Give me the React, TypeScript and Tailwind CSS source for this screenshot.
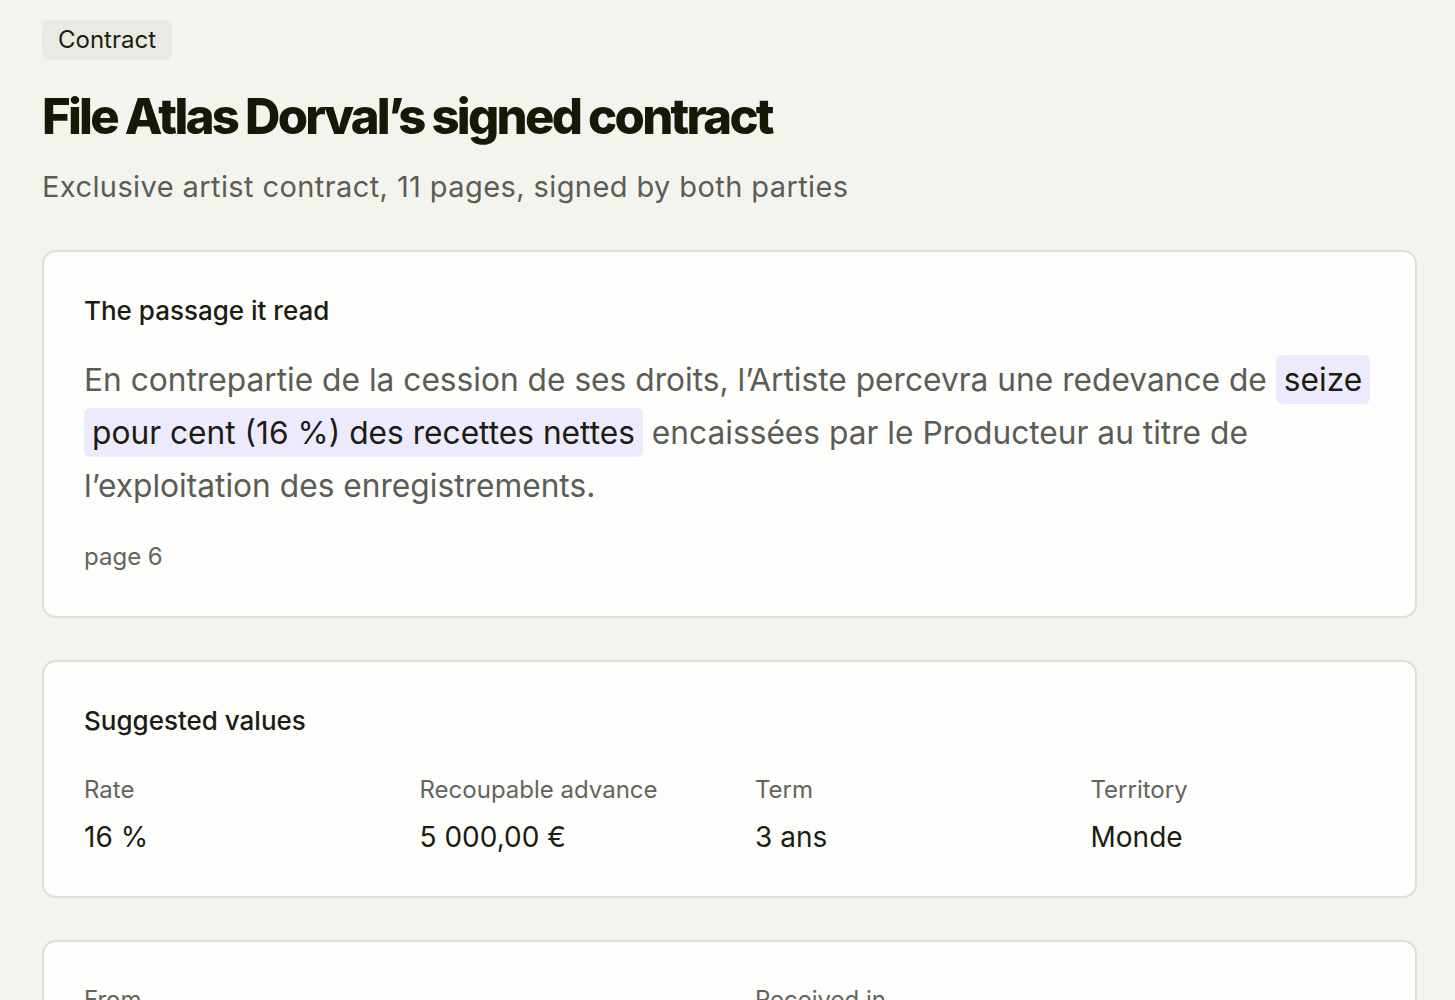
const baseFont = { fontFamily: 'Inter, "Noto Sans", sans-serif' };

function Field({ label, value }: { label: string; value: string }) {
  return (
    <div className="flex flex-col gap-[13px]">
      <span className="text-[24px] leading-8 text-[#63655d]">{label}</span>
      <span className="text-[28px] leading-9 text-[#1b1d12]">{value}</span>
    </div>
  );
}

export default function App() {
  return (
    <div className="min-h-screen bg-[#f4f4ef] pl-[42px] pr-[38px] pt-5 pb-10" style={baseFont}>
      <span className="inline-block rounded-md bg-[#e9eae4] px-4 text-[24px] leading-10 text-[#1b1d12]">
        Contract
      </span>

      <h1 className="mt-[29px] text-[49px] font-extrabold leading-[56px] tracking-[-0.056em] text-[#161808]">
        File Atlas Dorval’s signed contract
      </h1>
      <p className="mt-6 text-[29px] leading-9 tracking-[0.014em] text-[#5b5d55]">
        Exclusive artist contract, 11 pages, signed by both parties
      </p>

      <div className="mt-[45px] flex flex-col gap-[42px]">
        <section className="rounded-[14px] border-2 border-[#dfdfd9] bg-[#fdfdfb] px-10 pt-[42px] pb-[43px]">
          <h2 className="text-[26px] font-medium leading-[34px] text-[#1b1d12]">The passage it read</h2>
          <p className="mt-[25px] text-[31.7px] leading-[53px] text-[#5b5d55]">
            En contrepartie de la cession de ses droits, l’Artiste percevra une redevance de{' '}
            <span className="rounded-md bg-[#eeeafd] px-2 py-[5px] text-[#1b1d12] [box-decoration-break:clone] [-webkit-box-decoration-break:clone]">
              seize pour cent (16 %) des recettes nettes
            </span>{' '}
            encaissées par le Producteur au titre de l’exploitation des enregistrements.
          </p>
          <p className="mt-[29px] text-[24px] leading-8 text-[#63655d]">page 6</p>
        </section>

        <section className="rounded-[14px] border-2 border-[#dfdfd9] bg-[#fdfdfb] px-10 pt-[42px] pb-[41px]">
          <h2 className="text-[26px] font-medium leading-[34px] text-[#1b1d12]">Suggested values</h2>
          <div className="mt-9 grid grid-cols-4 gap-x-[51px]">
            <Field label="Rate" value="16 %" />
            <Field label="Recoupable advance" value="5 000,00 €" />
            <Field label="Term" value="3 ans" />
            <Field label="Territory" value="Monde" />
          </div>
        </section>

        <section className="rounded-[14px] border-2 border-[#dfdfd9] bg-[#fdfdfb] px-10 py-[42px]">
          <div className="grid grid-cols-2 gap-x-[51px]">
            <Field label="From" value="Maison Dorval Management" />
            <Field label="Received in" value="Contracts inbox" />
          </div>
        </section>
      </div>
    </div>
  );
}
